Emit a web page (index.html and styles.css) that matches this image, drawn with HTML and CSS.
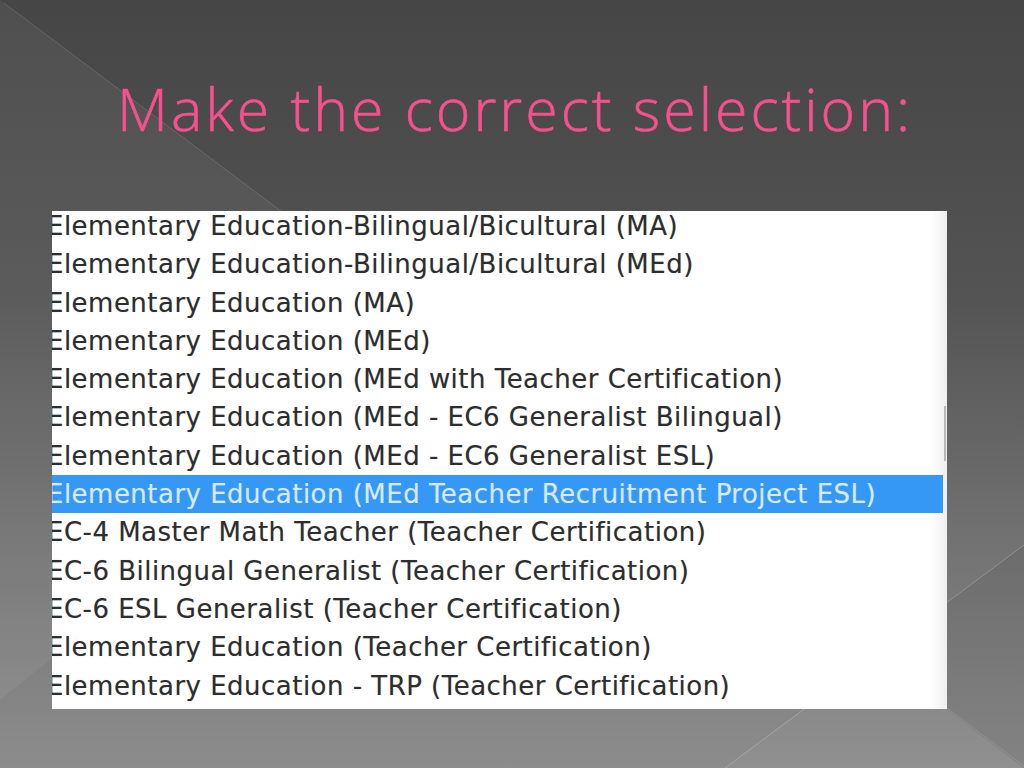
FILE: index.html
```html
<!DOCTYPE html>
<html lang="en">
<head>
<meta charset="utf-8">
<title>Make the correct selection</title>
<link rel="stylesheet" href="styles.css">
</head>
<body>
<div class="slide">
  <svg class="backdrop" width="1024" height="768" viewBox="0 0 1024 768" aria-hidden="true">
    <polygon points="0,0 450,338 0,700" fill="rgba(255,255,255,0.05)"/>
    <line x1="4" y1="3" x2="450" y2="338" stroke="rgba(255,255,255,0.14)" stroke-width="1"/>
    <polygon points="725,768 876,655 1024,768" fill="rgba(255,255,255,0.04)"/>
    <polygon points="876,655 1024,545 1024,768" fill="rgba(0,0,0,0.06)"/>
    <line x1="725" y1="768" x2="1024" y2="545" stroke="rgba(255,255,255,0.22)" stroke-width="1"/>
    <line x1="876" y1="655" x2="1024" y2="766" stroke="rgba(255,255,255,0.14)" stroke-width="1"/>
  </svg>
  <h1 class="title">Make the correct selection:</h1>
  <div class="listbox">
    <ul class="options">
      <li class="option">Elementary Education-Bilingual/Bicultural (MA)</li>
      <li class="option">Elementary Education-Bilingual/Bicultural (MEd)</li>
      <li class="option">Elementary Education (MA)</li>
      <li class="option">Elementary Education (MEd)</li>
      <li class="option">Elementary Education (MEd with Teacher Certification)</li>
      <li class="option">Elementary Education (MEd - EC6 Generalist Bilingual)</li>
      <li class="option">Elementary Education (MEd - EC6 Generalist ESL)</li>
      <li class="option selected">Elementary Education (MEd Teacher Recruitment Project ESL)</li>
      <li class="option">EC-4 Master Math Teacher (Teacher Certification)</li>
      <li class="option">EC-6 Bilingual Generalist (Teacher Certification)</li>
      <li class="option">EC-6 ESL Generalist (Teacher Certification)</li>
      <li class="option">Elementary Education (Teacher Certification)</li>
      <li class="option">Elementary Education - TRP (Teacher Certification)</li>
    </ul>
  </div>
</div>
</body>
</html>
```
FILE: styles.css
```css
html, body {
  margin: 0;
  padding: 0;
}

body {
  width: 1024px;
  height: 768px;
  overflow: hidden;
  background: #4a4a4a;
}

.slide {
  position: relative;
  width: 1024px;
  height: 768px;
  box-sizing: border-box;
  padding-top: 79px;
  display: flex;
  flex-direction: column;
  background: linear-gradient(to bottom, #464646 0px, #4c4c4c 150px, #545454 300px, #6a6a6a 480px, #7c7c7c 620px, #8c8c8c 768px);
}

.backdrop {
  position: absolute;
  left: 0;
  top: 0;
  z-index: 0;
}

.title {
  position: relative;
  z-index: 1;
  margin: 0 0 74px 0;
  padding-left: 117px;
  height: 58px;
  font-family: "Open Sans", "Lato", sans-serif;
  font-weight: 300;
  font-size: 59px;
  line-height: 58px;
  letter-spacing: 3px;
  font-variant-ligatures: none;
  color: #f7508f;
  -webkit-text-stroke: 0.6px #f7508f;
  white-space: nowrap;
}

.listbox {
  position: relative;
  z-index: 1;
  margin-left: 52px;
  width: 895px;
  height: 498px;
  overflow: hidden;
  background: linear-gradient(to right, #ffffff 0, #ffffff calc(100% - 16px), #eeeeee 100%);
}

.listbox::after {
  content: "";
  position: absolute;
  right: 1px;
  top: 195px;
  width: 2px;
  height: 55px;
  background: #b8b8b8;
}

.options {
  list-style: none;
  margin: -4px 0 0 0;
  padding: 0;
}

.option {
  height: 38.3px;
  line-height: 38.3px;
  margin-left: -5px;
  margin-right: 4px;
  font-family: "DejaVu Sans", sans-serif;
  font-size: 26px;
  letter-spacing: 0.48px;
  font-variant-ligatures: none;
  color: #2e2e2e;
  white-space: nowrap;
  text-shadow: 0 0 1px rgba(0, 0, 0, 0.25);
}

.option.selected {
  margin-left: 0;
  padding-left: 0;
  text-indent: -5px;
  background: #3598f4;
  color: #d6eaff;
  text-shadow: 0 0 1px rgba(255, 255, 255, 0.3);
}
```
